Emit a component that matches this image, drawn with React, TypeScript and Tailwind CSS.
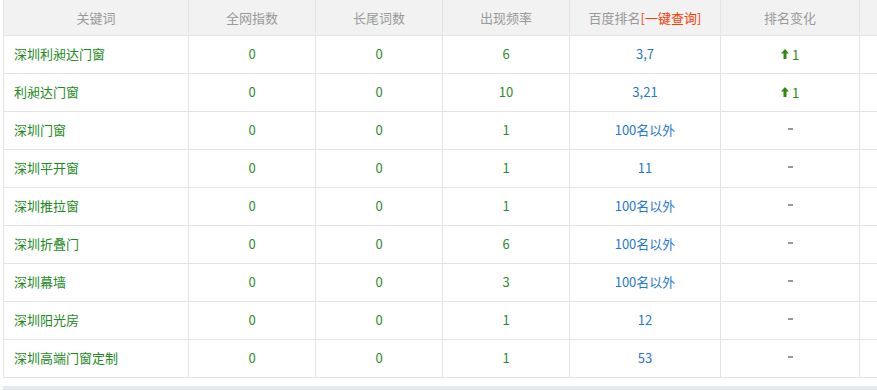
import React from "react";

type Row = { kw: string; qw: string; cw: string; freq: string; rank: string; change: number | null };

const rows: Row[] = [
  { kw: "深圳利昶达门窗", qw: "0", cw: "0", freq: "6", rank: "3,7", change: 1 },
  { kw: "利昶达门窗", qw: "0", cw: "0", freq: "10", rank: "3,21", change: 1 },
  { kw: "深圳门窗", qw: "0", cw: "0", freq: "1", rank: "100名以外", change: null },
  { kw: "深圳平开窗", qw: "0", cw: "0", freq: "1", rank: "11", change: null },
  { kw: "深圳推拉窗", qw: "0", cw: "0", freq: "1", rank: "100名以外", change: null },
  { kw: "深圳折叠门", qw: "0", cw: "0", freq: "6", rank: "100名以外", change: null },
  { kw: "深圳幕墙", qw: "0", cw: "0", freq: "3", rank: "100名以外", change: null },
  { kw: "深圳阳光房", qw: "0", cw: "0", freq: "1", rank: "12", change: null },
  { kw: "深圳高端门窗定制", qw: "0", cw: "0", freq: "1", rank: "53", change: null },
];

function UpArrow() {
  return (
    <svg width="8" height="10" viewBox="0 0 8 10" className="inline-block mr-[3px] mb-[1px]">
      <path d="M4 0 L8 4.5 L5.5 4.5 L5.5 10 L2.5 10 L2.5 4.5 L0 4.5 Z" fill="#2f8a0c" />
    </svg>
  );
}

export default function App() {
  const font = { fontFamily: '"Microsoft YaHei", "Noto Sans CJK SC", "Noto Sans", sans-serif' };
  return (
    <div className="w-[877px] h-[390px] overflow-hidden bg-white relative" style={font}>
      <div className="pl-[3px]">
        <table className="table-fixed border-collapse text-[13px] w-[960px]">
          <colgroup>
            <col className="w-[185px]" />
            <col className="w-[127px]" />
            <col className="w-[127px]" />
            <col className="w-[127px]" />
            <col className="w-[151px]" />
            <col className="w-[139px]" />
            <col className="w-[104px]" />
          </colgroup>
          <thead>
            <tr className="h-[35px] bg-[#f2f2f2] text-[#999]">
              <th className="font-normal border-x border-b border-[#e4e4e4]">关键词</th>
              <th className="font-normal border-x border-b border-[#e4e4e4]">全网指数</th>
              <th className="font-normal border-x border-b border-[#e4e4e4]">长尾词数</th>
              <th className="font-normal border-x border-b border-[#e4e4e4]">出现频率</th>
              <th className="font-normal border-x border-b border-[#e4e4e4]">
                百度排名<span className="text-[#ff3c00]">[一键查询]</span>
              </th>
              <th className="font-normal border-x border-b border-[#e4e4e4]">排名变化</th>
              <th className="font-normal border-x border-b border-[#e4e4e4]"></th>
            </tr>
          </thead>
          <tbody>
            {rows.map((r, i) => (
              <tr key={i} className="h-[38px]">
                <td className="border border-[#e4e4e4] pl-[10px] text-[#1d8a1d]">{r.kw}</td>
                <td className="border border-[#e4e4e4] text-center text-[#2d8a2d]">{r.qw}</td>
                <td className="border border-[#e4e4e4] text-center text-[#2d8a2d]">{r.cw}</td>
                <td className="border border-[#e4e4e4] text-center text-[#2d8a2d]">{r.freq}</td>
                <td className="border border-[#e4e4e4] text-center text-[#1f78d1]">{r.rank}</td>
                <td className="border border-[#e4e4e4] text-center text-[#2f8a0c]">
                  {r.change !== null ? (
                    <span className="inline-flex items-center">
                      <UpArrow />
                      {r.change}
                    </span>
                  ) : (
                    <span className="inline-block w-[5px] h-[2px] bg-[#999] relative top-[-5px]"></span>
                  )}
                </td>
                <td className="border border-[#e4e4e4]"></td>
              </tr>
            ))}
          </tbody>
        </table>
      </div>
      <div className="absolute left-[3px] right-0 bottom-0 h-[4px] bg-[#e6e9f0]"></div>
    </div>
  );
}
